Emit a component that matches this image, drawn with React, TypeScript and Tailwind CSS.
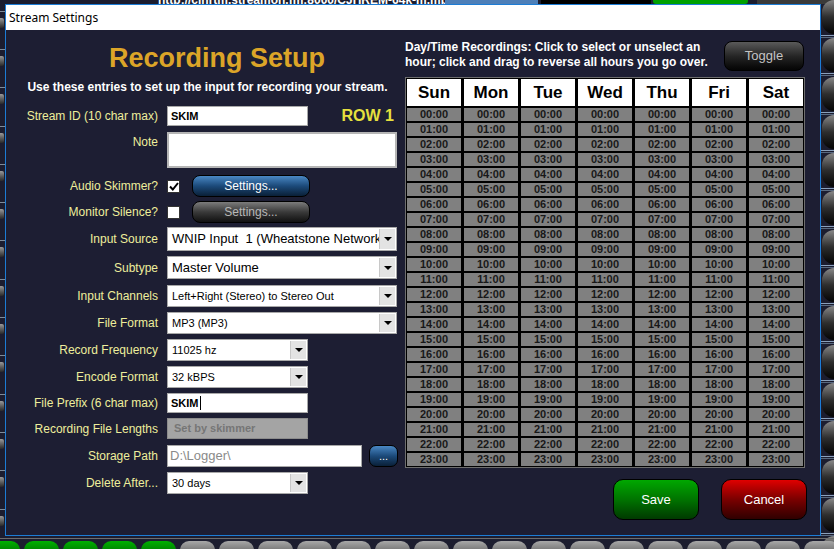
import React from 'react';

const hours = Array.from({ length: 24 }, (_, i) => `${String(i).padStart(2, '0')}:00`);
const days = ['Sun', 'Mon', 'Tue', 'Wed', 'Thu', 'Fri', 'Sat'];

function Arrow() {
  return (
    <div className="w-[16px] h-full bg-[#e3e3e3] border-l border-[#c8c8c8] flex items-center justify-center">
      <svg width="8" height="4" viewBox="0 0 8 4">
        <path d="M0 0 L8 0 L4 4 Z" fill="#000" />
      </svg>
    </div>
  );
}

function Select({ width, text, big }: { width: string; text: string; big?: boolean }) {
  return (
    <div className={`${width} h-full bg-white border border-[#a8a8a8] flex items-stretch p-[1px]`}>
      <div
        className={`flex-1 min-w-0 overflow-hidden whitespace-pre flex items-center pl-[3px] text-black ${
          big ? 'text-[13px]' : 'text-[11px]'
        }`}
      >
        {text}
      </div>
      <Arrow />
    </div>
  );
}

function Label({ children, top }: { children: React.ReactNode; top?: boolean }) {
  return (
    <div
      className={`w-[152px] shrink-0 text-right text-[12px] text-[#eeee9c] ${top ? 'self-start pt-[1px]' : ''}`}
    >
      {children}
    </div>
  );
}

function CheckBox({ checked }: { checked?: boolean }) {
  return (
    <div className="w-[13px] h-[13px] bg-white border border-[#333] flex items-center justify-center">
      {checked && (
        <svg width="10" height="9" viewBox="0 0 10 9">
          <path d="M1 4.5 L3.8 7.5 L9 1" stroke="#000" strokeWidth="2" fill="none" />
        </svg>
      )}
    </div>
  );
}

export default function App() {
  return (
    <div className="relative w-[834px] h-[549px] overflow-hidden bg-[#1c1d2f] font-['Liberation_Sans',Arial,sans-serif]">
      {/* background app, top strip */}
      <div className="absolute left-[158px] top-[-9px] text-[12px] font-bold text-white whitespace-nowrap">
        http://cjhrtm.streamon.fm:8000/CJHREM-64k-m.mp3
      </div>
      <div className="absolute left-[445px] top-0 w-[93px] h-[4px] bg-[#4d7fb8]" />
      <div className="absolute left-[541px] top-0 w-[110px] h-[4px] bg-black" />
      <div className="absolute left-[653px] top-0 w-[95px] h-[4px] bg-[#00a000] rounded-b-[3px]" />
      <div className="absolute left-[757px] top-0 w-[77px] h-[4px] bg-[#3a3a3a]" />

      {/* background app, left strip */}
      <div className="absolute left-0 top-0 w-[5px] h-[549px] flex flex-col">
        {Array.from({ length: 14 }).map((_, i) => (
          <div key={i} className="h-[38.3px] shrink-0 flex flex-col justify-center gap-[6px]">
            <div className="h-[1px] bg-[#7f8c9a]" />
            <div className="h-[10px] w-[4px] bg-gradient-to-b from-[#9a9a9a] to-[#2a2a2a] rounded-r-[2px]" />
          </div>
        ))}
      </div>

      {/* background app, right strip */}
      <div className="absolute left-[821px] top-0 w-[13px] h-[549px] flex flex-col">
        {Array.from({ length: 15 }).map((_, i) => (
          <div key={i} className="h-[38.3px] shrink-0 flex flex-col">
            <div className="h-[34px] rounded-l-full bg-gradient-to-b from-[#8a8a8a] via-[#2e2e2e] to-[#050505] ml-[1px]" />
            <div className="h-[1px] mt-[1px] bg-[#8aa0bc]" />
            <div className="h-[1px] mt-[1px] bg-[#5a6a80]" />
          </div>
        ))}
      </div>

      {/* background app, bottom strip */}
      <div className="absolute left-0 top-[538px] w-[834px] h-[1px] bg-[#6c6c6c]" />
      <div className="absolute left-[-15px] top-[541px] flex gap-[4px]">
        {Array.from({ length: 23 }).map((_, i) => (
          <div
            key={i}
            className={`w-[35px] h-[12px] rounded-t-[9px] ${
              i < 5
                ? 'bg-gradient-to-b from-[#00b000] to-[#007a00]'
                : 'bg-gradient-to-b from-[#a8a8a8] to-[#6a6a6a]'
            }`}
          />
        ))}
      </div>

      {/* dialog window */}
      <div className="absolute left-[5px] top-[4px] w-[816px] h-[532px] border border-[#1c7cd5] flex flex-col bg-[#1d1e33]">
        <div className="h-[25px] bg-white flex items-center pl-[3px] text-[12px] text-black font-['Segoe_UI','Noto_Sans',sans-serif]">
          Stream Settings
        </div>

        <div className="flex-1 flex">
          {/* left column */}
          <div className="w-[394px] flex flex-col">
            <div className="mt-[13px] h-[30px] leading-[30px] text-center pl-[28px] text-[27px] font-bold text-[#dca528]">
              Recording Setup
            </div>
            <div className="mt-[7px] leading-[14px] text-center pl-[9px] text-[12px] font-bold text-white">
              Use these entries to set up the input for recording your stream.
            </div>

            <div className="flex flex-col">
              <div className="mt-[12px] h-[20px] flex items-center gap-[9px]">
                <Label>Stream ID (10 char max)</Label>
                <div className="w-[141px] h-full bg-white border border-[#a8a8a8] flex items-center pl-[3px] text-[11px] font-bold text-black">
                  SKIM
                </div>
                <div className="ml-auto mr-[6px] text-[16px] font-bold text-[#e6e03e]">ROW 1</div>
              </div>

              <div className="mt-[6px] h-[36px] flex items-start gap-[9px]">
                <Label top>Note</Label>
                <div className="w-[230px] h-full bg-white border-2 border-[#b5b5b5]" />
              </div>

              <div className="mt-[7px] h-[22px] flex items-center gap-[9px]">
                <Label>Audio Skimmer?</Label>
                <CheckBox checked />
                <div className="ml-[3px] w-[118px] h-full rounded-[8px] border border-black bg-gradient-to-b from-[#4a88c4] via-[#1c4a7a] to-[#0a2038] flex items-center justify-center text-[12px] text-white">
                  Settings...
                </div>
              </div>

              <div className="mt-[4px] h-[22px] flex items-center gap-[9px]">
                <Label>Monitor Silence?</Label>
                <CheckBox />
                <div className="ml-[3px] w-[118px] h-full rounded-[8px] border border-black bg-gradient-to-b from-[#7c7c7c] via-[#3a3a3a] to-[#111] flex items-center justify-center text-[12px] text-[#b8b8b8]">
                  Settings...
                </div>
              </div>

              <div className="mt-[4px] h-[24px] flex items-center gap-[9px]">
                <Label>Input Source</Label>
                <Select width="w-[230px]" text="WNIP Input  1 (Wheatstone Network" big />
              </div>

              <div className="mt-[5px] h-[23px] flex items-center gap-[9px]">
                <Label>Subtype</Label>
                <Select width="w-[230px]" text="Master Volume" big />
              </div>

              <div className="mt-[6px] h-[22px] flex items-center gap-[9px]">
                <Label>Input Channels</Label>
                <Select width="w-[230px]" text="Left+Right (Stereo) to Stereo Out" />
              </div>

              <div className="mt-[5px] h-[22px] flex items-center gap-[9px]">
                <Label>File Format</Label>
                <Select width="w-[230px]" text="MP3 (MP3)" />
              </div>

              <div className="mt-[5px] h-[22px] flex items-center gap-[9px]">
                <Label>Record Frequency</Label>
                <Select width="w-[141px]" text="11025 hz" />
              </div>

              <div className="mt-[5px] h-[22px] flex items-center gap-[9px]">
                <Label>Encode Format</Label>
                <Select width="w-[141px]" text="32 kBPS" />
              </div>

              <div className="mt-[5px] h-[20px] flex items-center gap-[9px]">
                <Label>File Prefix (6 char max)</Label>
                <div className="w-[141px] h-full bg-white border border-[#a8a8a8] flex items-center pl-[3px] text-[11px] font-bold text-black">
                  SKIM
                  <span className="w-[1px] h-[14px] bg-black ml-[1px]" />
                </div>
              </div>

              <div className="mt-[5px] h-[21px] flex items-center gap-[9px]">
                <Label>Recording File Lengths</Label>
                <div className="w-[141px] h-full bg-[#a4a4a4] border border-[#8c8c8c] flex items-center pl-[6px] text-[11px] font-bold text-[#767676]">
                  Set by skimmer
                </div>
              </div>

              <div className="mt-[6px] h-[22px] flex items-center gap-[9px]">
                <Label>Storage Path</Label>
                <div className="w-[195px] h-full bg-white border border-[#a8a8a8] flex items-center pl-[2px] text-[13px] text-[#8a8a8a]">
                  {'D:\\Logger\\'}
                </div>
                <div className="ml-[-2px] w-[29px] h-[22px] rounded-[7px] border border-black bg-gradient-to-b from-[#4a88c4] via-[#1c4a7a] to-[#0a2038] flex items-center justify-center text-[11px] text-white leading-none">
                  ...
                </div>
              </div>

              <div className="mt-[5px] h-[22px] flex items-center gap-[9px]">
                <Label>Delete After...</Label>
                <Select width="w-[141px]" text="30 days" />
              </div>
            </div>
          </div>

          {/* right column */}
          <div className="flex-1 pl-[5px] pr-[15px] pt-[10px] flex flex-col">
            <div className="flex items-start">
              <div className="w-[310px] text-[12px] leading-[15px] font-bold text-white">
                Day/Time Recordings: Click to select or unselect an hour; click and drag to reverse all hours you go over.
              </div>
              <div className="ml-auto mr-[1px] mt-[1px] w-[80px] h-[30px] rounded-[8px] border border-black bg-gradient-to-b from-[#5a5a5a] via-[#262626] to-[#050505] flex items-center justify-center text-[13px] text-[#c4c4c4]">
                Toggle
              </div>
            </div>

            <div className="mt-[6px] border border-[#6e6e6e] bg-black p-[1px] grid grid-cols-7 gap-x-[3px] gap-y-[2px]">
              {days.map((d) => (
                <div key={d} className="h-[27px] bg-white flex items-center justify-center text-[17px] font-bold text-black">
                  {d}
                </div>
              ))}
              {hours.map((h) =>
                days.map((d) => (
                  <div
                    key={h + d}
                    className="h-[13px] bg-[#808080] flex items-center justify-center text-[11px] font-bold text-[#181818] leading-none"
                  >
                    {h}
                  </div>
                ))
              )}
            </div>

            <div className="mt-[11px] flex justify-end gap-[22px] -mr-[2px]">
              <div className="w-[86px] h-[41px] rounded-[10px] border border-black bg-gradient-to-b from-[#00a800] via-[#007400] to-[#003a00] flex items-center justify-center text-[13px] text-white">
                Save
              </div>
              <div className="w-[86px] h-[41px] rounded-[10px] border border-black bg-gradient-to-b from-[#e00000] via-[#7a0000] to-[#300000] flex items-center justify-center text-[13px] text-white">
                Cancel
              </div>
            </div>
          </div>
        </div>
      </div>
    </div>
  );
}
